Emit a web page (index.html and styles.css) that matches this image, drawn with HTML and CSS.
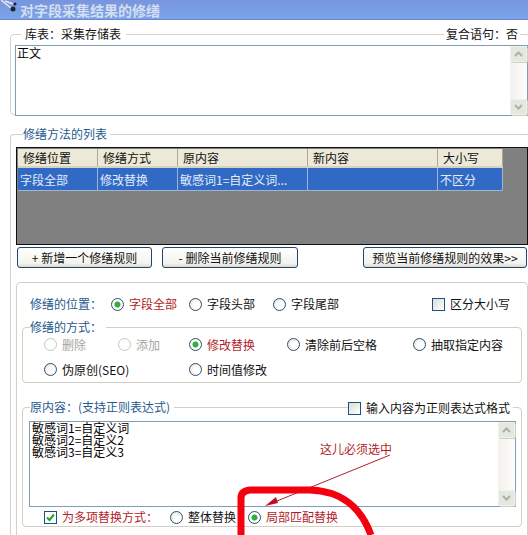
FILE: index.html
```html
<!DOCTYPE html>
<html lang="zh">
<head>
<meta charset="utf-8">
<title>对字段采集结果的修缮</title>
<link rel="stylesheet" href="styles.css">
</head>
<body>
<div class="window">
  <header class="titlebar">
    <svg class="scissors" width="18" height="16" viewBox="0 0 18 16"><path d="M0 0L10 8M4 1L12 4" stroke="#e8e8e8" stroke-width="1.5" fill="none"/><circle cx="12" cy="9" r="2.5" fill="#20242c"/><circle cx="14" cy="4" r="1.5" fill="#20242c"/></svg>
    <span class="title-text">对字段采集结果的修缮</span>
  </header>

  <fieldset class="fs fs-source">
    <legend class="lg">库表：采集存储表</legend>
    <span class="compound">复合语句：否</span>
    <div class="memo memo-top">
      <div class="memo-text">正文</div>
      <div class="sb"><span class="sb-btn"><svg width="9" height="6" viewBox="0 0 9 6"><path d="M1 5L4.500 1.500L8 5" class="chev"/></svg></span><span class="sb-btn"><svg width="9" height="6" viewBox="0 0 9 6"><path d="M1 1L4.500 4.500L8 1" class="chev"/></svg></span></div>
    </div>
  </fieldset>

  <fieldset class="fs fs-list">
    <legend class="lg lg-blue">修缮方法的列表</legend>
    <div class="grid">
      <div class="grid-row grid-head"><span>修缮位置</span><span>修缮方式</span><span>原内容</span><span>新内容</span><span>大小写</span></div>
      <div class="grid-row grid-sel"><span>字段全部</span><span>修改替换</span><span>敏感词1=自定义词...</span><span></span><span>不区分</span></div>
    </div>
    <div class="btn-row">
      <button class="btn btn-add">+ 新增一个修缮规则</button>
      <button class="btn btn-del">- 删除当前修缮规则</button>
      <button class="btn btn-prev">预览当前修缮规则的效果&gt;&gt;</button>
    </div>

    <div class="panel">
      <div class="pos-row">
        <span class="blue">修缮的位置：</span>
        <label class="opt red"><i class="radio on"></i>字段全部</label>
        <label class="opt"><i class="radio"></i>字段头部</label>
        <label class="opt"><i class="radio"></i>字段尾部</label>
        <label class="opt"><i class="check"></i>区分大小写</label>
      </div>

      <fieldset class="fs-in fs-method">
        <legend class="lg-in blue">修缮的方式：</legend>
        <div class="method-grid">
          <label class="opt off"><i class="radio dis"></i>删除</label>
          <label class="opt off"><i class="radio dis"></i>添加</label>
          <label class="opt red"><i class="radio on"></i>修改替换</label>
          <label class="opt"><i class="radio"></i>清除前后空格</label>
          <label class="opt"><i class="radio"></i>抽取指定内容</label>
          <label class="opt"><i class="radio"></i>伪原创(SEO)</label>
          <span></span>
          <label class="opt"><i class="radio"></i>时间值修改</label>
        </div>
      </fieldset>

      <fieldset class="fs-in fs-content">
        <legend class="lg-in blue">原内容：(支持正则表达式)</legend>
        <label class="opt regex"><i class="check"></i>输入内容为正则表达式格式</label>
        <div class="memo memo-bottom">
          <div class="memo-text lines">敏感词1=自定义词<br>敏感词2=自定义2<br>敏感词3=自定义3</div>
          <div class="sb"><span class="sb-btn"><svg width="9" height="6" viewBox="0 0 9 6"><path d="M1 5L4.500 1.500L8 5" class="chev"/></svg></span><span class="sb-btn"><svg width="9" height="6" viewBox="0 0 9 6"><path d="M1 1L4.500 4.500L8 1" class="chev"/></svg></span></div>
        </div>
        <div class="multi-row">
          <label class="opt red multi-label"><i class="check checked"><svg width="11" height="11" viewBox="0 0 11 11"><path d="M2 5.500L4.500 8L9 2.500" fill="none" stroke="#21a121" stroke-width="2"/></svg></i>为多项替换方式：</label>
          <label class="opt"><i class="radio"></i>整体替换</label>
          <label class="opt red"><i class="radio on"></i>局部匹配替换</label>
        </div>
      </fieldset>
    </div>
  </fieldset>
</div>

<span class="note">这儿必须选中</span>
<svg class="markup" width="528" height="535" viewBox="0 0 528 535">
  <path d="M390 455L272 503" stroke="#a8242c" stroke-width="1" fill="none"/>
  <path d="M265 506L276 497L278 503Z" fill="#c01020"/>
  <path d="M241 535V498Q241 491 250 490L310 490C340 491 360 505 371 535" stroke="#f4000f" stroke-width="7" fill="none"/>
</svg>
</body>
</html>
```
FILE: styles.css
```css
* { box-sizing: border-box; }
html, body { margin: 0; height: 535px; overflow: hidden; background: #fff; }
body { font: 12px/14px "Noto Sans CJK SC", "Liberation Sans", sans-serif; color: #111; position: relative; }
.window { width: 528px; height: 535px; overflow: hidden; }

.titlebar { height: 20px; display: flex; align-items: center; background: linear-gradient(#7895dd, #7aa5ec); border-bottom: 1px solid #6c86c8; overflow: hidden; }
.scissors { margin: -4px 1px 0 1px; flex: none; }
.title-text { font-size: 14px; line-height: 18px; font-weight: 700; color: #d5deee; }

.fs { margin: 0 0 0 10px; padding: 0; width: 520px; border: 1px solid #d6d3c6; border-radius: 4px; min-width: 0; position: relative; }
.lg { margin-left: 6px; padding: 0 5px 0 4px; height: 14px; line-height: 14px; }
.lg-blue { color: #1f5a8e; margin-left: 7px; padding: 0 3px 0 0; }
.fs-source { margin-top: 7px; height: 88px; padding: 4px 0 0 4px; }
.compound { position: absolute; left: 433px; top: -14px; background: #fff; padding: 0 2px; }

.memo { display: flex; background: #fff; border: 1px solid #7f9db9; }
.memo-top { height: 71px; width: 513px; }
.memo-text { flex: 1; padding: 0 1px; color: #000; }
.lines { line-height: 12px; padding: 0 2px; }
.sb { width: 17px; flex: none; display: flex; flex-direction: column; justify-content: space-between; background: linear-gradient(90deg, #f3f1ec, #fdfdfb); }
.sb-btn { height: 16px; display: flex; align-items: center; justify-content: center; background: #e4e9e0; border: 1px solid #f0f2ea; border-radius: 2px; box-shadow: 1px 1px 0 #cfcfc6; }
.chev { fill: none; stroke: #a9b3a8; stroke-width: 2; }

.fs-list { margin-top: 12px; height: 410px; padding: 6px 0 0 5px; border-bottom: 0; border-right: 0; }
.grid { width: 512px; height: 98px; background: #808080; border: 1px solid #111; padding: 1px 0 0 1px; }
.grid-row { display: grid; grid-template-columns: 80px 80px 130px 130px 65px; width: 485px; }
.grid-row span { overflow: hidden; white-space: nowrap; }
.grid-head { height: 19px; background: #ece9d8; align-items: center; border-bottom: 2px solid #d6d2c2; width: 485px; }
.grid-head span { padding-left: 5px; border-right: 1px solid #aca899; height: 17px; line-height: 18px; }
.grid-sel { height: 23px; background: #316ac5; color: #e4ecf8; border-bottom: 1px solid #9db4d4; align-items: stretch; }
.grid-sel span { border-right: 1px solid #9db4d4; line-height: 23px; padding-left: 2px; }

.btn-row { display: flex; margin-top: 2px; }
.btn { height: 21px; padding: 0; font: inherit; color: #111; background: linear-gradient(#fff, #f4f3ee 80%, #dcd8c8); border: 1px solid #20456e; border-radius: 3px; }
.btn-add { width: 135px; margin-left: 1px; }
.btn-del { width: 136px; margin-left: 10px; }
.btn-prev { width: 164px; margin-left: 65px; }

.panel { margin-top: 14px; width: 512px; height: 300px; border: 1px solid #d2d0c4; border-radius: 4px; padding-top: 14px; }
.blue { color: #1f5a8e; }
.red { color: #b01c28; }
.off { color: #a6a6a0; }
.opt { display: flex; align-items: center; gap: 5px; white-space: nowrap; }
.pos-row { display: grid; grid-template-columns: 81px 78px 84px 159px auto; margin-left: 13px; height: 14px; align-items: center; }

.radio { width: 13px; height: 13px; flex: none; border-radius: 50%; border: 1px solid #2f4f68; background: radial-gradient(circle at 60% 60%, #fff 30%, #dcdcd4 100%); display: inline-block; }
.radio.on { background: radial-gradient(circle, #2fae3f 0 2.500px, #fff 3.500px 5px, #dcdcd4 100%); }
.radio.dis { border-color: #c6c6bc; background: #fff; }
.check { width: 13px; height: 13px; flex: none; border: 1px solid #1c5180; background: linear-gradient(135deg, #dcdcd4, #fff); display: inline-block; }
.check.checked { background: #fff; display: flex; }

.fs-in { margin: 0; padding: 0; min-width: 0; width: 500px; border: 1px solid #d2d0c4; border-radius: 4px; }
.lg-in { margin-left: 7px; padding: 0 4px 0 0; height: 14px; line-height: 14px; }
.fs-method { margin: 9px 0 0 5px; height: 63px; }
.method-grid { display: grid; grid-template-columns: 74px 71px 98px 126px auto; grid-auto-rows: 25px; margin: -2px 0 0 21px; align-items: center; }
.fs-content { margin: 17px 0 0 5px; height: 127px; position: relative; }
.regex { position: absolute; left: 325px; top: -13px; background: #fff; padding-right: 3px; }
.memo-bottom { width: 487px; height: 86px; margin: 7px 0 0 6px; }
.multi-row { display: flex; margin: 3px 0 0 21px; align-items: center; height: 14px; }
.multi-label { width: 126px; }
.multi-row .opt:nth-child(2) { width: 78px; }

.note { position: absolute; left: 320px; top: 442px; color: #b01c28; }
.markup { position: absolute; left: 0; top: 0; pointer-events: none; }
```
